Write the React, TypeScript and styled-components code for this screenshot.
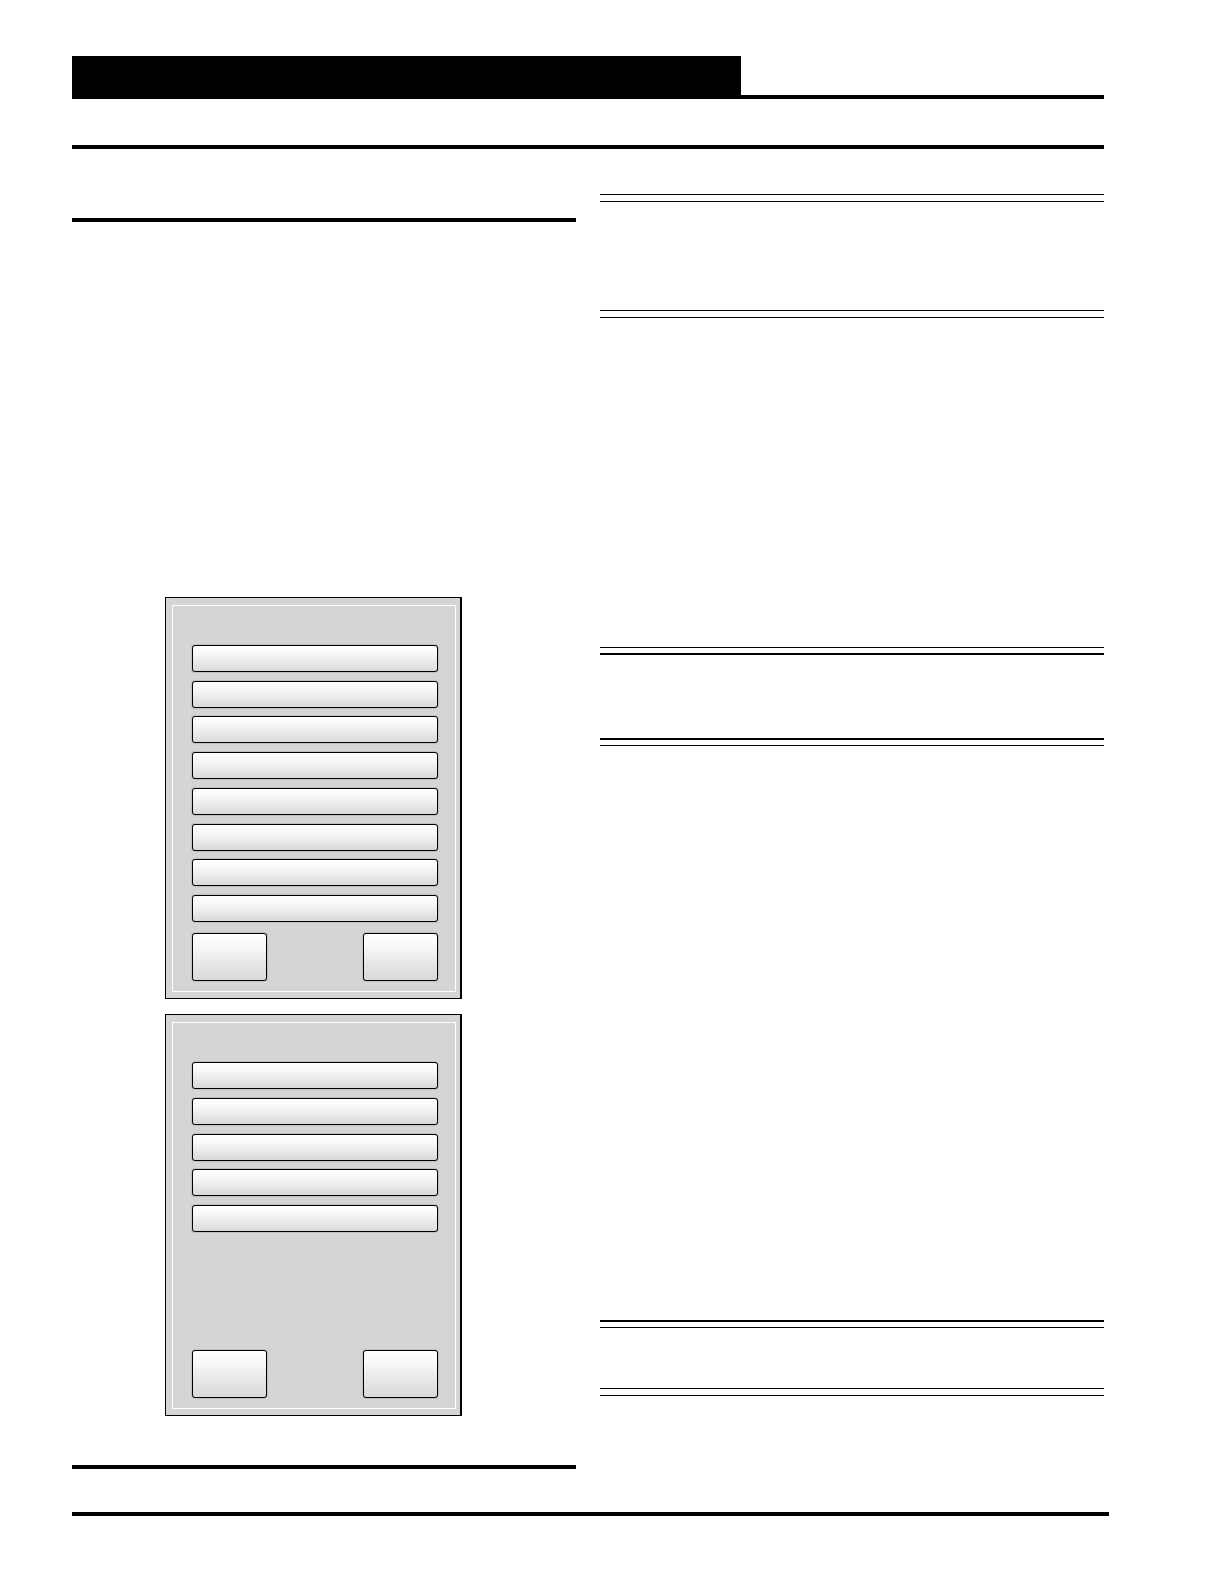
import React from 'react';
import styled, { createGlobalStyle } from 'styled-components';

const GlobalStyle = createGlobalStyle`
  *, *::before, *::after { box-sizing: border-box; }
  body {
    margin: 0;
    background: #fff;
    font-family: "Liberation Sans", Arial, sans-serif;
  }
`;

const Page = styled.div`
  padding: 56px 115px 68px 72px;
`;

const Sheet = styled.div`
  margin-right: 5px;
`;

const Header = styled.header`
  display: grid;
  grid-template-columns: 24fr 13fr;
  height: 43px;
  border-bottom: 4px solid #000;
`;

const TitleBar = styled.div`
  background: #000;
`;

const SubHeader = styled.div`
  height: 50px;
  border-bottom: 4px solid #000;
`;

const Columns = styled.main`
  display: grid;
  grid-template-columns: 1fr 1fr;
  column-gap: 24px;
`;

const Column = styled.section`
  display: flex;
  flex-direction: column;
`;

const SectionHeading = styled.div`
  height: 73px;
  border-bottom: 4px solid #000;
`;

const Copy = styled.div<{ $space: number }>`
  min-height: ${(p) => p.$space}px;
`;

const Screens = styled.div`
  display: flex;
  flex-direction: column;
  gap: 15px;
  padding: 0 114px 0 93px;
`;

const Screen = styled.div`
  height: 402px;
  padding: 7px 4px 6px 6px;
  background: #d4d6d5;
  border: 1px solid #000;
  border-right-width: 2px;
`;

const ScreenFrame = styled.div`
  display: flex;
  flex-direction: column;
  justify-content: space-between;
  height: 100%;
  padding: 39px 17px 10px 19px;
  border: 1px solid #fff;
`;

const Menu = styled.div<{ $height: number }>`
  display: flex;
  flex-direction: column;
  justify-content: space-between;
  height: ${(p) => p.$height}px;
`;

const Key = styled.button`
  display: block;
  margin: 0;
  padding: 0;
  border: 1px solid #000;
  border-radius: 3px;
  box-shadow: 0 0 1px #000;
  background: linear-gradient(#fff 0%, #f8f8f8 30%, #e8e9e9 65%, #d8dada 100%);
`;

const MenuKey = styled(Key)`
  width: 100%;
  height: 27px;
`;

const NavKeys = styled.div`
  display: flex;
  justify-content: space-between;
`;

const NavKey = styled(Key)`
  width: 75px;
  height: 48px;
  background: linear-gradient(#fff 0%, #f7f7f8 30%, #e5e6e8 65%, #d7d9db 100%);
`;

const DoubleRule = styled.div<{ $top?: number; $bottom?: number }>`
  height: 8px;
  border: 0 solid #000;
  border-top-width: ${(p) => p.$top ?? 1}px;
  border-bottom-width: ${(p) => p.$bottom ?? 1}px;
`;

const EndRule = styled.div`
  height: 4px;
  background: #000;
`;

const Footer = styled.footer`
  margin-top: 43px;
  border-top: 4px solid #000;
`;

function TouchScreen({ name, keys, height }: { name: string; keys: number; height: number }) {
  return (
    <Screen role="group" aria-label={name}>
      <ScreenFrame>
        <Menu $height={height}>
          {Array.from({ length: keys }, (_, i) => (
            <MenuKey key={i} type="button" aria-label={`Option ${i + 1}`} />
          ))}
        </Menu>
        <NavKeys>
          <NavKey type="button" aria-label="Left key" />
          <NavKey type="button" aria-label="Right key" />
        </NavKeys>
      </ScreenFrame>
    </Screen>
  );
}

export default function App() {
  return (
    <>
      <GlobalStyle />
      <Page>
        <Sheet>
          <Header>
            <TitleBar />
          </Header>
          <SubHeader />
          <Columns>
            <Column>
              <SectionHeading />
              <Copy $space={375} />
              <Screens>
                <TouchScreen name="Screen 1" keys={8} height={277} />
                <TouchScreen name="Screen 2" keys={5} height={170} />
              </Screens>
              <Copy $space={49} />
              <EndRule />
            </Column>
            <Column>
              <Copy $space={45} />
              <DoubleRule />
              <Copy $space={108} />
              <DoubleRule />
              <Copy $space={329} />
              <DoubleRule $bottom={2} />
              <Copy $space={83} />
              <DoubleRule $top={2} />
              <Copy $space={574} />
              <DoubleRule $top={2} />
              <Copy $space={60} />
              <DoubleRule />
            </Column>
          </Columns>
        </Sheet>
        <Footer />
      </Page>
    </>
  );
}
